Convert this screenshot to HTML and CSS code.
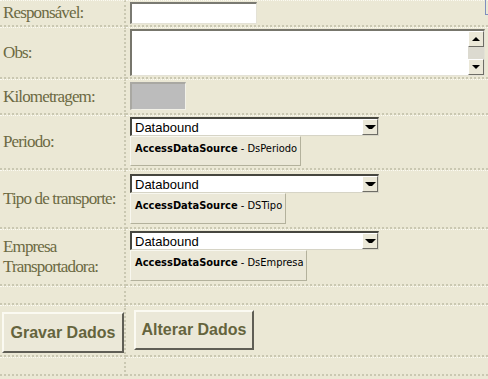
FILE: index.html
```html
<!DOCTYPE html>
<html>
<head>
<meta charset="utf-8">
<link rel="stylesheet" href="styles.css">
</head>
<body>
<div class="form">
  <div class="lbl r1">Responsável:</div>
  <div class="val r1 row-flex">
    <div class="txt"></div>
    <div class="edge"></div>
  </div>

  <div class="lbl r2">Obs:</div>
  <div class="val r2">
    <div class="area">
      <div class="sb">
        <div class="sbtn"><span class="tri up"></span></div>
        <div class="track"></div>
        <div class="sbtn"><span class="tri down"></span></div>
      </div>
    </div>
  </div>

  <div class="lbl r3">Kilometragem:</div>
  <div class="val r3"><div class="km"></div></div>

  <div class="lbl r4">Periodo:</div>
  <div class="val r4">
    <div class="sel"><span>Databound</span><div class="arr"><span class="tri down"></span></div></div>
    <div class="ds w1"><b>AccessDataSource</b> - DsPeriodo</div>
  </div>

  <div class="lbl r5">Tipo de transporte:</div>
  <div class="val r5">
    <div class="sel m3"><span>Databound</span><div class="arr"><span class="tri down"></span></div></div>
    <div class="ds w2 tall"><b>AccessDataSource</b> - DSTipo</div>
  </div>

  <div class="lbl r6">Empresa Transportadora:</div>
  <div class="val r6">
    <div class="sel"><span>Databound</span><div class="arr"><span class="tri down"></span></div></div>
    <div class="ds w3 tall"><b>AccessDataSource</b> - DsEmpresa</div>
  </div>

  <div class="lbl r7"></div>
  <div class="val r7"></div>

  <div class="lbl r8 top"><button class="btn gravar">Gravar Dados</button></div>
  <div class="val r8"><button class="btn alterar">Alterar Dados</button></div>

  <div class="lbl r9"></div>
  <div class="val r9"></div>
</div>
</body>
</html>
```

FILE: styles.css
```css
html, body {
  margin: 0;
  padding: 0;
  background: #ebe8d5;
  overflow: hidden;
}

.form {
  display: grid;
  grid-template-columns: 126px 1fr;
  grid-template-rows: 27px 52px 36px 55px 59px 57px 19px 52px 19px;
  width: 488px;
}

.lbl, .val {
  box-sizing: border-box;
  border-top: 1px dotted #fbfaf2;
  border-bottom: 2px dotted #cac8b2;
}

.lbl {
  border-right: 2px dotted #cac8b2;
  padding-left: 3px;
  display: flex;
  align-items: center;
  font-family: "Liberation Serif", "Times New Roman", serif;
  font-size: 17px;
  letter-spacing: -0.85px;
  line-height: 20px;
  color: #6c6a43;
}

.lbl.top {
  align-items: flex-start;
  padding-left: 2px;
}

.val {
  padding-left: 4px;
}

.row-flex {
  display: flex;
  align-items: flex-start;
}

.txt {
  margin-top: 1px;
  width: 127px;
  height: 22px;
  box-sizing: border-box;
  background: #fff;
  border-top: 2px solid #7a7a72;
  border-left: 2px solid #7a7a72;
  border-right: 1px solid #e4e2d6;
  border-bottom: 1px solid #e4e2d6;
}

.edge {
  margin-left: auto;
  width: 2px;
  height: 14px;
  margin-top: -1px;
  border-left: 1px solid #7f8fbf;
  border-bottom: 1px solid #7f8fbf;
}

.area {
  margin-top: 1px;
  width: 355px;
  height: 47px;
  box-sizing: border-box;
  background: #fff;
  border-top: 2px solid #77766c;
  border-left: 2px solid #77766c;
  border-right: 1px solid #e4e2d6;
  border-bottom: 1px solid #e4e2d6;
  display: flex;
  justify-content: flex-end;
}

.sb {
  width: 16px;
  display: flex;
  flex-direction: column;
  background: #dcdad0;
}

.sbtn {
  height: 16px;
  box-sizing: border-box;
  background: #ebe8d8;
  border-top: 1px solid #fff;
  border-left: 1px solid #fff;
  border-right: 1px solid #6e6d66;
  border-bottom: 1px solid #6e6d66;
  display: flex;
  align-items: center;
  justify-content: center;
}

.track {
  flex: 1;
}

.tri {
  width: 0;
  height: 0;
  border-left: 4px solid transparent;
  border-right: 4px solid transparent;
}

.tri.up {
  border-bottom: 4px solid #000;
}

.tri.down {
  border-top: 4px solid #000;
}

.km {
  margin-top: 2px;
  width: 56px;
  height: 28px;
  box-sizing: border-box;
  background: #bcbcbc;
  border-top: 2px solid #a9a8a2;
  border-left: 2px solid #a9a8a2;
  border-right: 1px solid #f2f1e8;
  border-bottom: 1px solid #f2f1e8;
}

.sel {
  margin-top: 1px;
  width: 249px;
  height: 19px;
  box-sizing: border-box;
  background: #fff;
  border-top: 2px solid #46463f;
  border-left: 2px solid #46463f;
  border-right: 1px solid #d6d4c6;
  border-bottom: 1px solid #d6d4c6;
  display: flex;
  align-items: center;
  justify-content: space-between;
  font-family: "Liberation Sans", Arial, sans-serif;
  font-size: 13px;
  color: #000;
}

.sel.m3 {
  margin-top: 3px;
}

.sel span {
  padding-left: 3px;
  line-height: 15px;
}

.arr {
  width: 16px;
  height: 16px;
  box-sizing: border-box;
  background: #ebe8d8;
  border-top: 1px solid #fff;
  border-left: 1px solid #fff;
  border-right: 1px solid #6e6d66;
  border-bottom: 1px solid #6e6d66;
  display: flex;
  align-items: center;
  justify-content: center;
  align-self: flex-start;
}

.ds {
  height: 30px;
  box-sizing: border-box;
  background: #ebe8d8;
  border-top: 1px solid #f8f7ef;
  border-left: 1px solid #f8f7ef;
  border-right: 1px solid #b3b19c;
  border-bottom: 1px solid #b3b19c;
  padding: 5px 0 0 4px;
  font-family: "DejaVu Sans Condensed", Tahoma, sans-serif;
  font-size: 11px;
  line-height: 14px;
  color: #000;
  white-space: nowrap;
}

.ds.tall {
  height: 31px;
}

.ds b {
  font-weight: bold;
}

.w1 { width: 171px; }
.w2 { width: 156px; }
.w3 { width: 177px; }

.btn {
  box-sizing: border-box;
  background: #ebe8d8;
  border-top: 2px solid #fbfaf2;
  border-left: 2px solid #fbfaf2;
  border-right: 2px solid #5f5e55;
  border-bottom: 2px solid #5f5e55;
  font-family: "Liberation Sans", Arial, sans-serif;
  font-weight: bold;
  font-size: 16px;
  color: #65643d;
  padding: 0;
  display: block;
}

.gravar {
  margin-top: 6px;
  width: 124px;
  height: 41px;
}

.alterar {
  margin-top: 4px;
  margin-left: 4px;
  width: 120px;
  height: 40px;
}
```
